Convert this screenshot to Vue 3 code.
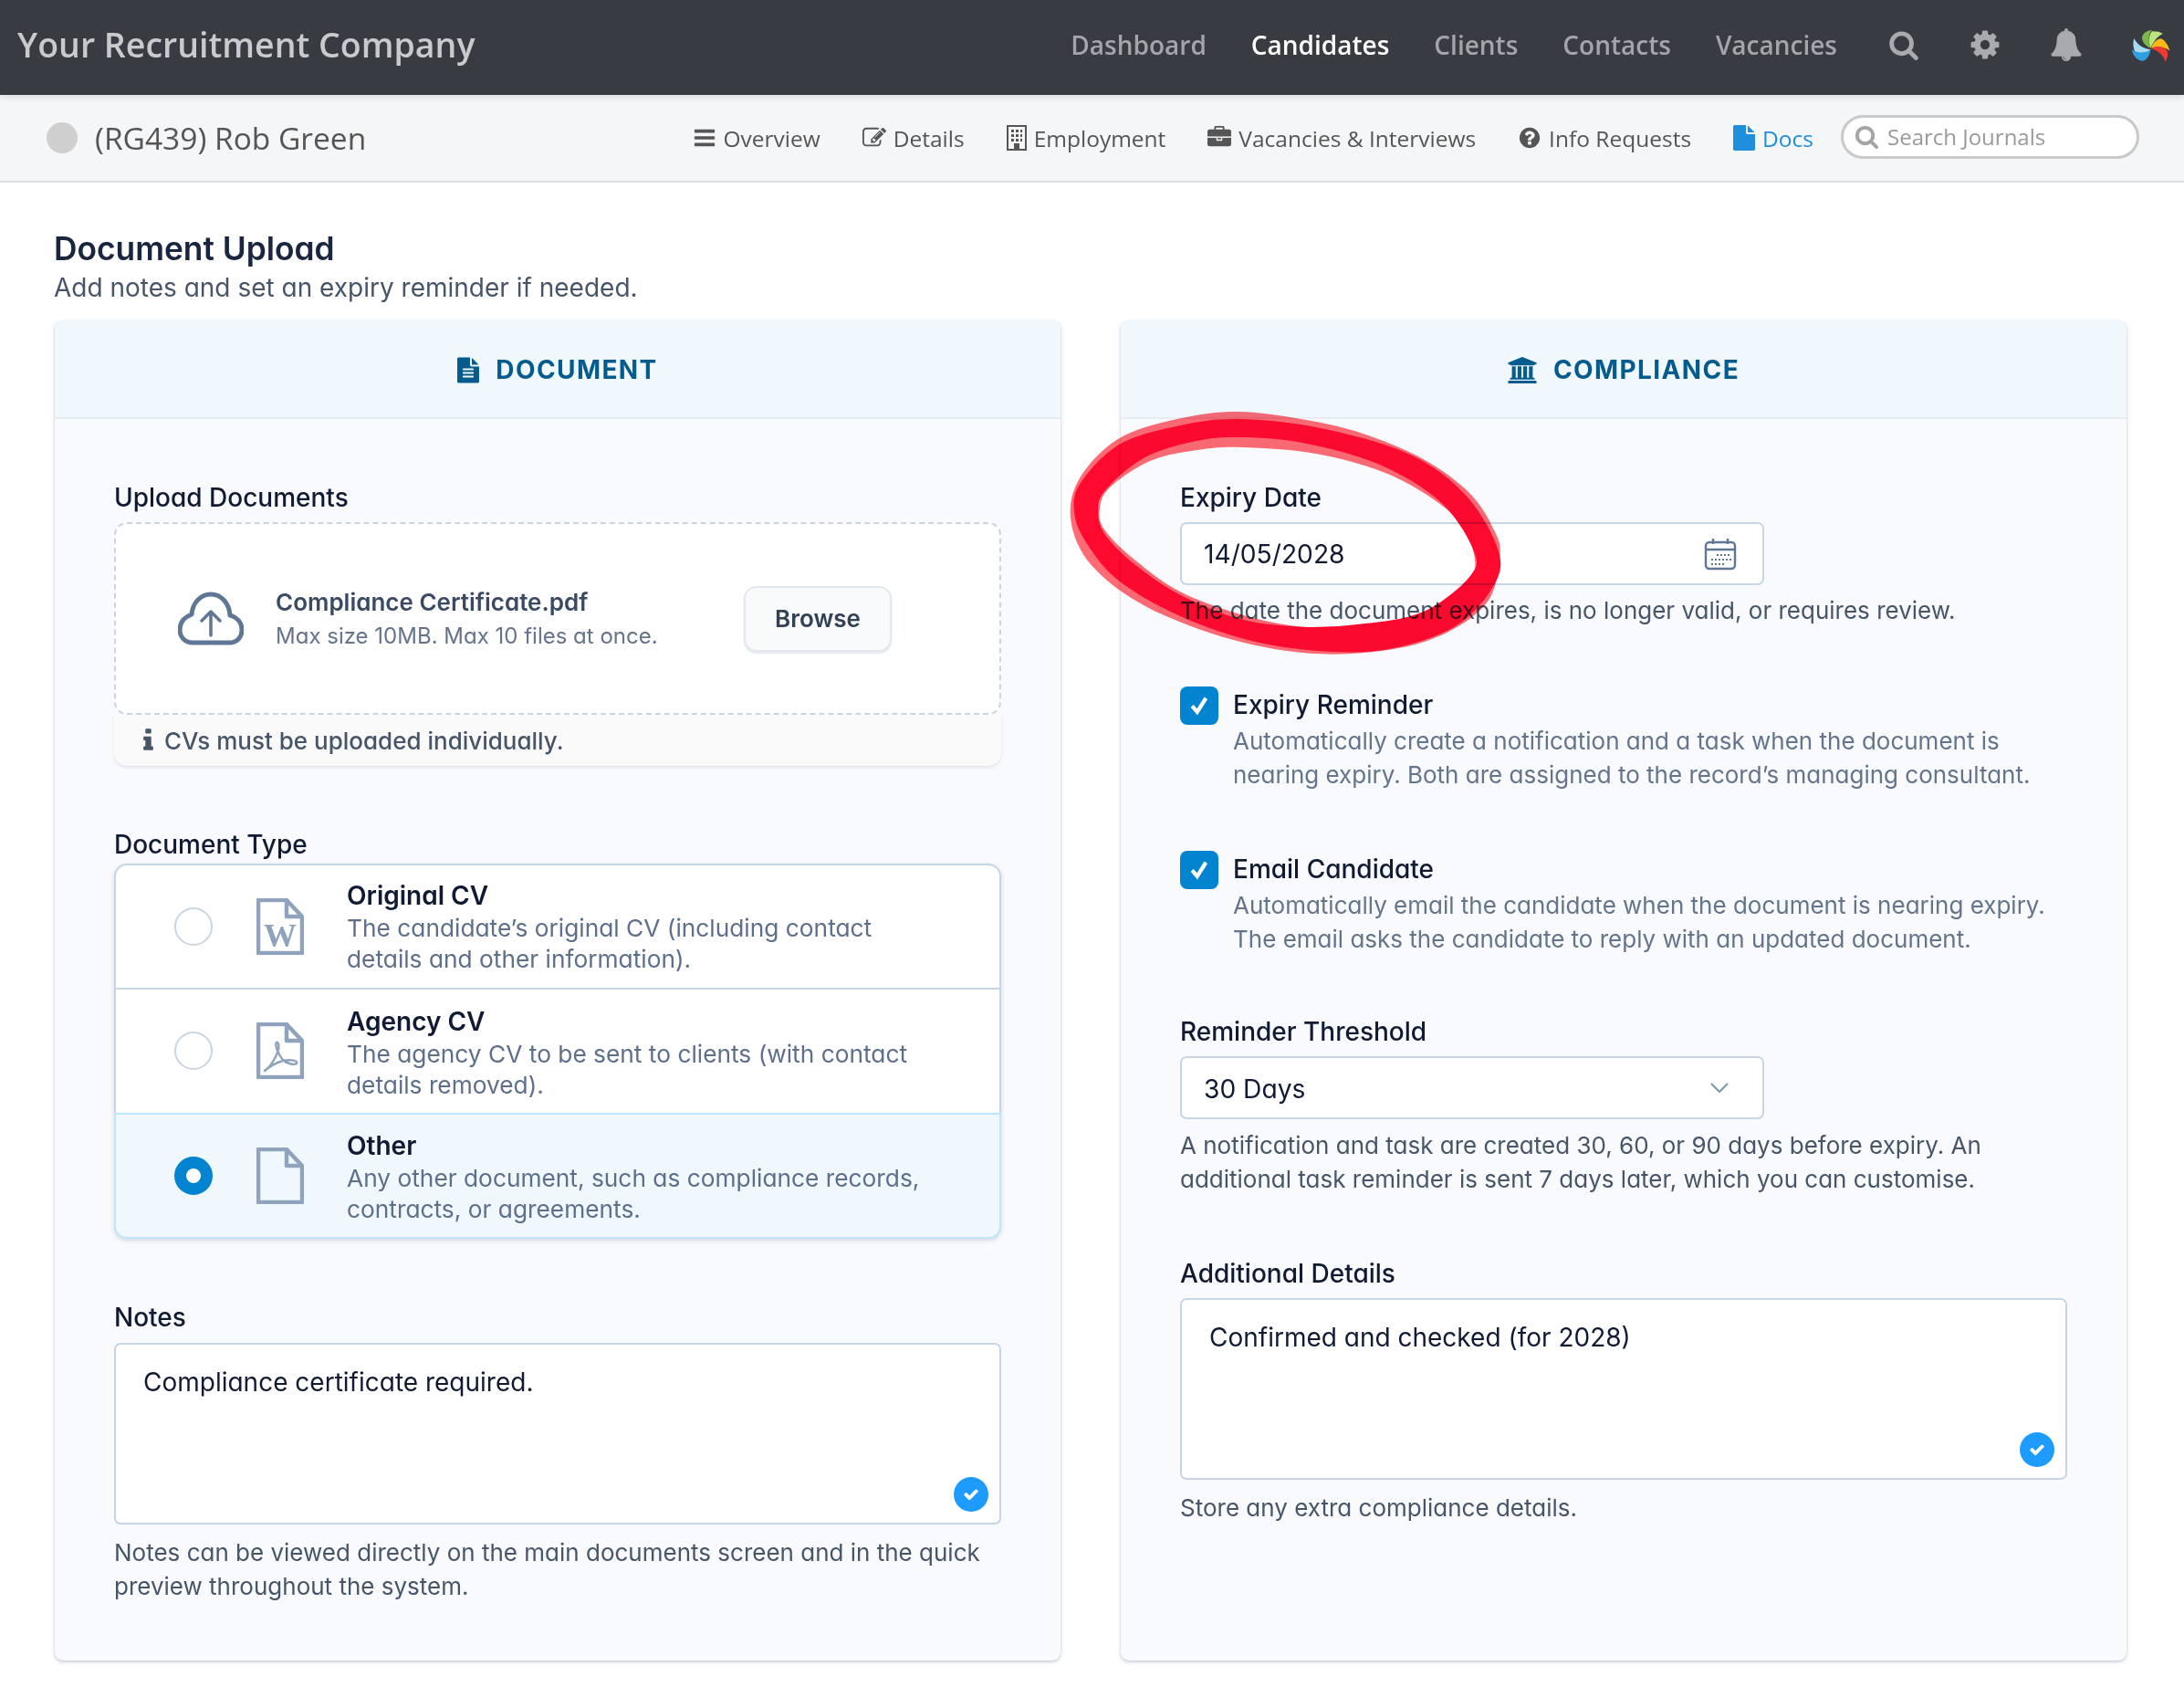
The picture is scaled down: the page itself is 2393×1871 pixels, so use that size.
<script setup>
const mainNav = [
  { label: 'Dashboard' },
  { label: 'Candidates', active: true },
  { label: 'Clients' },
  { label: 'Contacts' },
  { label: 'Vacancies' },
];

const docTypes = [
  { title: 'Original CV', kind: 'word', desc: 'The candidate’s original CV (including contact details and other information).' },
  { title: 'Agency CV', kind: 'pdf', desc: 'The agency CV to be sent to clients (with contact details removed).' },
  { title: 'Other', kind: 'blank', selected: true, desc: 'Any other document, such as compliance records, contracts, or agreements.' },
];

// closed smooth curve through traced points, used for the hand drawn ring
function smooth(pts) {
  const n = pts.length;
  let d = `M${pts[0][0]} ${pts[0][1]}`;
  for (let i = 0; i < n; i++) {
    const p0 = pts[(i - 1 + n) % n];
    const p1 = pts[i];
    const p2 = pts[(i + 1) % n];
    const p3 = pts[(i + 2) % n];
    const c1 = [p1[0] + (p2[0] - p0[0]) / 6, p1[1] + (p2[1] - p0[1]) / 6];
    const c2 = [p2[0] - (p3[0] - p1[0]) / 6, p2[1] - (p3[1] - p1[1]) / 6];
    d += `C${c1[0]} ${c1[1]} ${c2[0]} ${c2[1]} ${p2[0]} ${p2[1]}`;
  }
  return d + 'Z';
}

const lightOuter = [[590, 33], [800, 58], [1000, 105], [1200, 190], [1350, 300], [1430, 420], [1450, 510], [1400, 670], [1200, 790], [900, 830], [600, 790], [300, 680], [110, 540], [40, 390], [70, 250], [200, 120], [400, 55]];
const hole = [[600, 150], [850, 172], [1100, 245], [1300, 375], [1365, 500], [1345, 600], [1200, 690], [1000, 735], [800, 740], [600, 700], [400, 625], [250, 520], [150, 420], [135, 350], [170, 280], [300, 195], [450, 160]];
const solidOuter = [[590, 57], [850, 85], [1150, 172], [1340, 310], [1448, 500], [1420, 620], [1300, 740], [1100, 810], [900, 822], [650, 790], [400, 705], [200, 590], [95, 470], [52, 370], [70, 270], [200, 140], [400, 78]];
const solidInner = [[590, 117], [800, 135], [1050, 205], [1250, 325], [1360, 480], [1355, 570], [1200, 690], [1000, 730], [800, 740], [600, 715], [400, 635], [250, 535], [155, 440], [130, 370], [150, 295], [280, 185], [450, 130]];

const ringLight = smooth(lightOuter) + smooth(hole);
const ringSolid = smooth(solidOuter) + smooth(solidInner);
</script>

<template>
  <div class="page">
    <header class="topbar">
      <div class="brand">Your Recruitment Company</div>
      <nav class="main-nav">
        <a v-for="item in mainNav" :key="item.label" :class="{ active: item.active }">{{ item.label }}</a>
      </nav>
      <div class="top-icons">
        <svg class="ti-search" viewBox="0 0 1792 1792"><path d="M1216 832q0-185-131.500-316.500t-316.500-131.500-316.500 131.500-131.500 316.500 131.500 316.500 316.500 131.500 316.500-131.500 131.500-316.500zm512 832q0 52-38 90t-90 38q-54 0-90-38l-343-342q-179 124-399 124-143 0-273.500-55.500t-225-150-150-225-55.500-273.500 55.500-273.500 150-225 225-150 273.500-55.500 273.500 55.500 225 150 150 225 55.500 273.500q0 220-124 399l343 343q37 37 37 90z"/></svg>
        <svg class="ti-cog" viewBox="0 0 1792 1792"><path d="M1152 896q0-106-75-181t-181-75-181 75-75 181 75 181 181 75 181-75 75-181zm512-109v222q0 12-8 23t-20 13l-185 28q-19 54-39 91 35 50 107 138 10 12 10 25t-9 23q-27 37-99 108t-94 71q-12 0-26-9l-138-108q-44 23-91 38-16 136-29 186-7 28-36 28h-222q-14 0-24.500-8.500t-11.500-21.500l-28-184q-49-16-90-37l-141 107q-10 9-25 9-14 0-25-11-126-114-165-168-7-10-7-23 0-12 8-23 15-21 51-66.500t54-70.500q-27-50-41-99l-183-27q-13-2-21-12.500t-8-23.500v-222q0-12 8-23t19-13l186-28q14-46 39-92-40-57-107-138-10-12-10-24 0-10 9-23 26-36 98.500-107.500t94.500-71.500q13 0 26 10l138 107q44-23 91-38 16-136 29-186 7-28 36-28h222q14 0 24.500 8.500t11.500 21.500l28 184q49 16 90 37l142-107q9-9 24-9 13 0 25 10 129 119 165 170 7 8 7 22 0 12-8 23-15 21-51 66.500t-54 70.500q26 50 41 98l183 28q13 2 21 12.500t8 23.500z"/></svg>
        <svg class="ti-bell" viewBox="0 0 1792 1792"><path d="M912 1696q0-16-16-16-59 0-101.500-42.500t-42.500-101.500q0-16-16-16t-16 16q0 73 51.500 124.500t124.500 51.500q16 0 16-16zm816-288q0 52-38 90t-90 38h-448q0 106-75 181t-181 75-181-75-75-181h-448q-52 0-90-38t-38-90q50-42 91-88t85-119.500 74.500-158.500 50-206 19.500-260q0-152 117-282.500t307-158.500q-8-19-8-39 0-40 28-68t68-28 68 28 28 68q0 20-8 39 190 28 307 158.500t117 282.500q0 139 19.500 260t50 206 74.500 158.500 85 119.500 91 88z"/></svg>
        <svg class="ti-logo" viewBox="250 60 136 116">
          <path fill="#7ab648" d="M318 128C296 118 284 100 292 84C300 72 312 68 322 67C310 80 310 105 318 128Z"/>
          <path fill="#bde57f" d="M318 128C310 105 312 85 322 72C338 72 350 74 358 80C340 88 328 105 318 128Z"/>
          <path fill="#fbb917" d="M320 128C325 110 340 96 352 96C365 100 376 118 381 136C365 125 340 120 320 128Z"/>
          <path fill="#ee3a33" d="M320 130C340 118 360 122 372 136C378 150 372 162 367 173C362 155 345 135 320 130Z"/>
          <path fill="#a6dcee" d="M318 132C295 130 275 118 263 95C258 110 260 130 268 142C285 150 305 148 318 132Z"/>
          <path fill="#2f9fe0" d="M318 132C300 145 275 145 256 133C258 150 270 165 288 170C305 170 315 150 318 132Z"/>
        </svg>
      </div>
    </header>

    <div class="subnav">
      <span class="status-dot"></span>
      <span class="person">(RG439) Rob Green</span>
      <nav class="sub-links">
        <a>
          <svg class="si" viewBox="0 0 1792 1792"><path d="M1664 1344v128q0 26-19 45t-45 19h-1408q-26 0-45-19t-19-45v-128q0-26 19-45t45-19h1408q26 0 45 19t19 45zm0-512v128q0 26-19 45t-45 19h-1408q-26 0-45-19t-19-45v-128q0-26 19-45t45-19h1408q26 0 45 19t19 45zm0-512v128q0 26-19 45t-45 19h-1408q-26 0-45-19t-19-45v-128q0-26 19-45t45-19h1408q26 0 45 19t19 45z"/></svg>
          Overview
        </a>
        <a>
          <svg class="si" viewBox="0 0 1792 1792"><path d="M888 1184l116-116-152-152-116 116v56h96v96h56zm440-720q-16-16-33 1l-350 350q-17 17-1 33t33-1l350-350q17-17 1-33zm80 594v190q0 119-84.500 203.500t-203.500 84.500h-832q-119 0-203.500-84.500t-84.500-203.500v-832q0-119 84.500-203.500t203.500-84.500h832q63 0 117 25 15 7 18 23 3 17-9 29l-49 49q-14 14-32 8-23-6-45-6h-832q-66 0-113 47t-47 113v832q0 66 47 113t113 47h832q66 0 113-47t47-113v-126q0-13 9-22l64-64q15-15 35-7t20 29zm-96-738l288 288-672 672h-288v-288zm444 132l-92 92-288-288 92-92q28-28 68-28t68 28l152 152q28 28 28 68t-28 68z"/></svg>
          Details
        </a>
        <a>
          <svg class="si building" viewBox="0 0 22 28">
            <rect x="1" y="1" width="20" height="26" fill="none" stroke="#555" stroke-width="2"/>
            <path d="M5 5h3v3H5zM10 5h3v3h-3zM15 5h2v3h-2zM5 10h3v3H5zM10 10h3v3h-3zM15 10h2v3h-2zM5 15h3v3H5zM10 15h3v3h-3zM15 15h2v3h-2zM8 20h6v7H8z"/>
          </svg>
          Employment
        </a>
        <a>
          <svg class="si" viewBox="0 0 1792 1792"><path d="M640 256h512v-128h-512v128zm1152 640v480q0 66-47 113t-113 47h-1472q-66 0-113-47t-47-113v-480h672v160q0 26 19 45t45 19h320q26 0 45-19t19-45v-160h672zm-768 0v128h-256v-128h256zm768-480v384h-1792v-384q0-66 47-113t113-47h352v-160q0-40 28-68t68-28h576q40 0 68 28t28 68v160h352q66 0 113 47t47 113z"/></svg>
          Vacancies &amp; Interviews
        </a>
        <a>
          <svg class="si" viewBox="0 0 1792 1792"><path d="M1024 1376v-192q0-14-9-23t-23-9h-192q-14 0-23 9t-9 23v192q0 14 9 23t23 9h192q14 0 23-9t9-23zm256-672q0-88-55.500-163t-138.500-116-170-41q-243 0-371 213-15 24 8 42l132 100q7 6 19 6 16 0 25-12 53-68 86-92 34-24 86-24 48 0 85.500 26t37.500 59q0 38-20 61t-68 45q-63 28-115.500 86.500t-52.500 125.500v36q0 14 9 23t23 9h192q14 0 23-9t9-23q0-19 21.500-49.500t54.500-49.500q32-18 49-28.500t46-35 44.500-48 28-60.500 12.500-81zm384 192q0 209-103 385.500t-279.500 279.500-385.500 103-385.500-103-279.500-279.500-103-385.500 103-385.500 279.500-279.500 385.500-103 385.500 103 279.500 279.500 103 385.500z"/></svg>
          Info Requests
        </a>
        <a class="current">
          <svg class="si" viewBox="128 0 1536 1792"><path d="M1152 512v-472q22 14 36 28l408 408q14 14 28 36h-472zm-128 32q0 40 28 68t68 28h544v1056q0 40-28 68t-68 28h-1344q-40 0-68-28t-28-68v-1600q0-40 28-68t68-28h800v544z"/></svg>
          Docs
        </a>
      </nav>
      <div class="journal-search">
        <svg viewBox="0 0 1792 1792"><path d="M1216 832q0-185-131.500-316.500t-316.500-131.500-316.500 131.500-131.500 316.500 131.500 316.500 316.500 131.500 316.500-131.500 131.500-316.500zm512 832q0 52-38 90t-90 38q-54 0-90-38l-343-342q-179 124-399 124-143 0-273.500-55.500t-225-150-150-225-55.500-273.500 55.500-273.500 150-225 225-150 273.500-55.500 273.500 55.500 225 150 150 225 55.500 273.500q0 220-124 399l343 343q37 37 37 90z"/></svg>
        <span>Search Journals</span>
      </div>
    </div>

    <main class="content">
      <h1 class="page-title">Document Upload</h1>
      <p class="page-sub">Add notes and set an expiry reminder if needed.</p>

      <div class="cards">
        <section class="card">
          <div class="card-head">
            <svg class="head-icon" viewBox="128 0 1536 1792"><path d="M1596 476q14 14 28 36h-472v-472q22 14 36 28zm-476 164h544v1056q0 40-28 68t-68 28h-1344q-40 0-68-28t-28-68v-1600q0-40 28-68t68-28h800v544q0 40 28 68t68 28zm160 736v-64q0-14-9-23t-23-9h-704q-14 0-23 9t-9 23v64q0 14 9 23t23 9h704q14 0 23-9t9-23zm0-256v-64q0-14-9-23t-23-9h-704q-14 0-23 9t-9 23v64q0 14 9 23t23 9h704q14 0 23-9t9-23zm0-256v-64q0-14-9-23t-23-9h-704q-14 0-23 9t-9 23v64q0 14 9 23t23 9h704q14 0 23-9t9-23z"/></svg>
            <h2>DOCUMENT</h2>
          </div>
          <div class="card-body">
            <label class="field-label">Upload Documents</label>
            <div class="dropzone">
              <svg class="cloud" viewBox="0 0 72 60" fill="none" stroke="#5f7694" stroke-width="5" stroke-linecap="round" stroke-linejoin="round">
                <path d="M16 56H56C65 56 70 50 70 42C70 34 65 28 57 26C56 12 47 3 36 3C25 3 16 12 15 25C7 28 2 34 2 42C2 50 8 56 16 56Z"/>
                <path d="M36 48V23M26 32L36 22L46 32" stroke-width="3.500"/>
              </svg>
              <div class="file-info">
                <div class="file-name">Compliance Certificate.pdf</div>
                <div class="file-limit">Max size 10MB. Max 10 files at once.</div>
              </div>
              <button class="browse">Browse</button>
            </div>
            <div class="drop-note">
              <svg viewBox="0 0 640 1792"><path d="M640 1344v128q0 26-19 45t-45 19h-512q-26 0-45-19t-19-45v-128q0-26 19-45t45-19h64v-384h-64q-26 0-45-19t-19-45v-128q0-26 19-45t45-19h384q26 0 45 19t19 45v576h64q26 0 45 19t19 45zm-128-1152v192q0 26-19 45t-45 19h-256q-26 0-45-19t-19-45v-192q0-26 19-45t45-19h256q26 0 45 19t19 45z"/></svg>
              CVs must be uploaded individually.
            </div>

            <label class="field-label gap-top">Document Type</label>
            <div class="type-list">
              <div v-for="t in docTypes" :key="t.title" class="type-row" :class="{ selected: t.selected }">
                <span class="radio"></span>
                <svg class="file-glyph" viewBox="0 0 52 62" fill="none" stroke="#8fa3bd" stroke-width="4.500" stroke-linejoin="round">
                  <path d="M2 2H33L50 20V60H2Z"/>
                  <path d="M33 2V20H50"/>
                  <text v-if="t.kind === 'word'" x="26" y="53" text-anchor="middle" class="w-mark">W</text>
                  <path v-if="t.kind === 'pdf'" stroke-width="2.500" d="M9 53C14 50 21 40 24 30C25 25 24 21 22 22C20 24 23 34 29 41C33 45 41 47 44 45C46 42 38 40 29 42C21 44 12 50 9 53Z"/>
                </svg>
                <div class="type-text">
                  <div class="type-title">{{ t.title }}</div>
                  <div class="type-desc">{{ t.desc }}</div>
                </div>
              </div>
            </div>

            <label class="field-label gap-top">Notes</label>
            <div class="textbox notes-box">
              Compliance certificate required.
              <span class="tick-badge"><svg viewBox="0 0 1792 1792"><path d="M1671 566q0 40-28 68l-724 724-136 136q-28 28-68 28t-68-28l-136-136-362-362q-28-28-28-68t28-68l136-136q28-28 68-28t68 28l294 295 656-657q28-28 68-28t68 28l136 136q28 28 28 68z"/></svg></span>
            </div>
            <p class="help notes-help">Notes can be viewed directly on the main documents screen and in the quick preview throughout the system.</p>
          </div>
        </section>

        <section class="card">
          <div class="card-head">
            <svg class="head-icon bank" viewBox="0 0 1920 1792"><path d="M960 0l960 384v128h-128q0 26-20.500 45t-48.500 19h-1526q-28 0-48.500-19t-20.500-45h-128v-128zm-704 640h256v768h128v-768h256v768h128v-768h256v768h128v-768h256v768h59q28 0 48.500 19t20.500 45v64h-1664v-64q0-26 20.500-45t48.500-19h59v-768zm1595 960q28 0 48.500 19t20.500 45v128h-1920v-128q0-26 20.500-45t48.500-19h1782z"/></svg>
            <h2>COMPLIANCE</h2>
          </div>
          <div class="card-body">
            <label class="field-label">Expiry Date</label>
            <div class="control">
              <span>14/05/2028</span>
              <svg class="calendar" viewBox="0 0 36 36" fill="none" stroke="#5f7694" stroke-width="2.400">
                <rect x="2" y="5" width="32" height="29" rx="4"/>
                <path d="M2 13H34M10 1V7M26 1V7"/>
                <path stroke-width="2" stroke-dasharray="2 2" d="M14 19H30M8 24H30M8 29H24"/>
              </svg>
            </div>
            <p class="help small-gap">The date the document expires, is no longer valid, or requires review.</p>

            <div class="check-row first">
              <span class="checkbox"><svg viewBox="0 0 24 24" fill="none" stroke="#fff" stroke-width="4.600"><path d="M3.500 12.500L9.500 19.500L20 3"/></svg></span>
              <div>
                <div class="check-title">Expiry Reminder</div>
                <p class="check-desc">Automatically create a notification and a task when the document is nearing expiry. Both are assigned to the record’s managing consultant.</p>
              </div>
            </div>
            <div class="check-row">
              <span class="checkbox"><svg viewBox="0 0 24 24" fill="none" stroke="#fff" stroke-width="4.600"><path d="M3.500 12.500L9.500 19.500L20 3"/></svg></span>
              <div>
                <div class="check-title">Email Candidate</div>
                <p class="check-desc">Automatically email the candidate when the document is nearing expiry. The email asks the candidate to reply with an updated document.</p>
              </div>
            </div>

            <label class="field-label section-top">Reminder Threshold</label>
            <div class="control select">
              <span>30 Days</span>
              <svg class="chevron" viewBox="0 0 20 12" fill="none" stroke="#7a9aa8" stroke-width="2.200"><path d="M1 1L10 10L19 1"/></svg>
            </div>
            <p class="help threshold-help">A notification and task are created 30, 60, or 90 days before expiry. An additional task reminder is sent 7 days later, which you can customise.</p>

            <label class="field-label details-label">Additional Details</label>
            <div class="textbox details-box">
              Confirmed and checked (for 2028)
              <span class="tick-badge"><svg viewBox="0 0 1792 1792"><path d="M1671 566q0 40-28 68l-724 724-136 136q-28 28-68 28t-68-28l-136-136-362-362q-28-28-28-68t28-68l136-136q28-28 68-28t68 28l294 295 656-657q28-28 68-28t68 28l136 136q28 28 28 68z"/></svg></span>
            </div>
            <p class="help details-help">Store any extra compliance details.</p>
          </div>
        </section>
      </div>
    </main>

    <!-- hand drawn annotation on top of the expiry date field -->
    <svg class="ring" viewBox="0 0 1500 870">
      <path fill="#ff6b75" fill-rule="evenodd" :d="ringLight"/>
      <path fill="#ff0a2e" fill-rule="evenodd" :d="ringSolid"/>
    </svg>
  </div>
</template>

<style scoped>
.page {
  position: relative;
  width: 2393px;
  height: 1871px;
  overflow: hidden;
  background: #fff;
  font-family: Inter, "Noto Sans", sans-serif;
  font-feature-settings: "cv11" 1;
  color: #111a33;
}

.topbar {
  height: 104px;
  background: #383b42;
  display: flex;
  align-items: center;
  padding: 0 14px 0 19px;
  font-family: "Open Sans", sans-serif;
  font-feature-settings: normal;
  position: relative;
  z-index: 2;
  box-shadow: 0 2px 8px rgba(0, 0, 0, 0.12);
}

.brand {
  color: #c9cacc;
  font-size: 37.500px;
  font-weight: 600;
  margin-top: -8px;
}

.main-nav {
  margin-left: auto;
  display: flex;
  gap: 49px;
  margin-top: -6px;
}

.main-nav a {
  color: #a3a5a8;
  font-size: 28px;
  font-weight: 600;
}

.main-nav a.active {
  color: #fff;
}

.top-icons {
  display: flex;
  align-items: center;
  margin-left: 56px;
  fill: #a8aaad;
  margin-top: -6px;
}

.ti-search {
  width: 34px;
  height: 34px;
}

.ti-cog {
  width: 36px;
  height: 36px;
  margin-left: 54px;
}

.ti-bell {
  width: 36px;
  height: 36px;
  margin-left: 53px;
}

.ti-logo {
  width: 45px;
  height: 39px;
  margin-left: 52px;
}

.subnav {
  height: 94px;
  box-sizing: content-box;
  background: #f5f6f8;
  border-bottom: 2px solid #dedfe1;
  display: flex;
  align-items: center;
  padding: 0 49px 0 51px;
  font-family: "Open Sans", sans-serif;
  font-feature-settings: normal;
  color: #555;
}

.status-dot {
  width: 34px;
  height: 34px;
  border-radius: 50%;
  background: #cfcfcf;
}

.person {
  margin-left: 19px;
  font-size: 33.500px;
}

.sub-links {
  margin-left: auto;
  display: flex;
  gap: 46px;
  font-size: 24.500px;
}

.sub-links a {
  display: flex;
  align-items: center;
  gap: 8px;
}

.si {
  width: 26px;
  height: 26px;
  fill: #555;
}

.si.building {
  width: 22px;
  height: 28px;
}

.sub-links a.current {
  color: #1f8fdc;
}

.sub-links a.current .si {
  fill: #1f8fdc;
  width: 24px;
  height: 28px;
}

.journal-search {
  margin-left: 30px;
  margin-top: -3px;
  width: 327px;
  height: 48px;
  box-sizing: border-box;
  border: 3px solid #c9c9c9;
  border-radius: 24px;
  background: #fff;
  display: flex;
  align-items: center;
  padding-left: 12px;
  gap: 9px;
  color: #9a9a9a;
  font-size: 24px;
}

.journal-search svg {
  width: 27px;
  height: 27px;
  fill: #a5a5a5;
}

.content {
  padding: 49px 63px 0 60px;
}

.page-title {
  margin: 0 0 0 -1px;
  font-size: 35.300px;
  line-height: 48px;
  font-weight: 600;
  color: #1a2540;
}

.page-sub {
  margin: 0 0 0 -1px;
  font-size: 28px;
  line-height: 37px;
  color: #475569;
}

.cards {
  margin-top: 17px;
  display: grid;
  grid-template-columns: 1fr 1fr;
  gap: 66px;
  height: 1468px;
}

.card {
  background: #f9fafd;
  border-radius: 9px;
  box-shadow: 0 1px 3px rgba(100, 116, 139, 0.3), 0 2px 5px rgba(100, 116, 139, 0.18);
  display: flex;
  flex-direction: column;
  overflow: hidden;
}

.card-head {
  height: 104px;
  padding-top: 2px;
  background: #f0f8fe;
  border-bottom: 2px solid #e6ecf2;
  display: flex;
  align-items: center;
  justify-content: center;
  gap: 18px;
  flex-shrink: 0;
}

.card-head h2 {
  margin: 0;
  font-size: 28px;
  font-weight: 700;
  letter-spacing: 1.400px;
  color: #045b8d;
}

.head-icon {
  width: 24px;
  height: 29px;
  fill: #045b8d;
}

.head-icon.bank {
  width: 32px;
  height: 29px;
}

.card-body {
  padding: 68px 65px 0;
  display: flex;
  flex-direction: column;
}

.field-label {
  font-size: 28px;
  line-height: 37px;
  font-weight: 500;
  color: #111a33;
  margin-bottom: 8px;
}

.gap-top {
  margin-top: 68px;
}

.dropzone {
  height: 211px;
  box-sizing: border-box;
  border: 2px dashed #cbd5e1;
  border-radius: 14px;
  background: #fff;
  display: flex;
  align-items: center;
  padding-left: 68px;
}

.cloud {
  width: 72px;
  height: 60px;
  flex-shrink: 0;
}

.file-info {
  margin-left: 35px;
  width: 513px;
}

.file-name {
  font-size: 26px;
  line-height: 36px;
  padding-top: 1px;
  font-weight: 600;
  color: #3a4a63;
}

.file-limit {
  font-size: 24px;
  line-height: 34px;
  padding-top: 2px;
  color: #64748b;
}

.browse {
  width: 162px;
  height: 72px;
  background: #f8fafc;
  border: 2px solid #e2e8f0;
  border-radius: 14px;
  box-shadow: 0 2px 2px rgba(148, 163, 184, 0.25);
  font: 600 26px Inter, sans-serif;
  font-feature-settings: "cv11" 1;
  color: #334155;
}

.drop-note {
  height: 56px;
  background: #fafafa;
  border-radius: 0 0 14px 14px;
  box-shadow: 0 2px 3px rgba(100, 116, 139, 0.15);
  display: flex;
  align-items: center;
  gap: 12px;
  padding-left: 32px;
  font-size: 26px;
  font-weight: 500;
  color: #475569;
}

.drop-note svg {
  width: 11px;
  height: 30px;
  fill: #475569;
}

.type-list {
  height: 411px;
  box-sizing: border-box;
  margin-top: -6px;
  border: 2px solid #c8d5e4;
  border-radius: 14px;
  background: #fff;
  display: flex;
  flex-direction: column;
  box-shadow: 0 2px 5px rgba(100, 116, 139, 0.25);
}

.type-row {
  flex: 1;
  display: flex;
  align-items: center;
  padding-left: 64px;
  border-bottom: 2px solid #c8d5e4;
}

.type-row:last-child {
  border-bottom: 0;
}

.type-row.selected {
  background: #f0f8fe;
  border-radius: 0 0 12px 12px;
  box-shadow: 0 0 0 2px #bfe6fb;
}

.type-row:not(:first-child) .type-text {
  padding-top: 4px;
}

.radio {
  width: 42px;
  height: 42px;
  box-sizing: border-box;
  border-radius: 50%;
  border: 2px solid #cbd5e1;
  background: #fff;
  flex-shrink: 0;
}

.selected .radio {
  border: 13px solid #0284d0;
}

.file-glyph {
  width: 52px;
  height: 62px;
  margin-left: 48px;
  flex-shrink: 0;
}

.w-mark {
  font: 700 36px "Liberation Serif", serif;
  fill: #8fa3bd;
  stroke: none;
}

.type-text {
  margin-left: 47px;
  width: 640px;
}

.type-title {
  font-size: 28px;
  line-height: 37px;
  font-weight: 600;
  color: #111a33;
}

.type-desc {
  font-size: 26.300px;
  line-height: 34px;
  color: #5d6f8b;
}

.textbox {
  position: relative;
  box-sizing: border-box;
  border: 2px solid #c8d5e4;
  border-radius: 7px;
  background: #fff;
  padding: 21px 20px 0 30px;
  font-size: 28px;
  line-height: 40px;
  color: #111a33;
}

.notes-box {
  height: 199px;
  margin-top: 1px;
}

.details-box {
  height: 199px;
}

.tick-badge {
  position: absolute;
  right: 12px;
  bottom: 12px;
  width: 38px;
  height: 38px;
  border-radius: 50%;
  background: #1e9bff;
  display: flex;
  align-items: center;
  justify-content: center;
}

.tick-badge svg {
  width: 18px;
  height: 18px;
  fill: #fff;
}

.help {
  margin: 0;
  font-size: 26px;
  line-height: 37px;
  color: #475569;
}

.notes-help {
  margin-top: 12px;
}

.details-help {
  margin-top: 12px;
}

.small-gap {
  margin-top: 9px;
}

.threshold-help {
  margin-top: 10px;
}

.details-label {
  margin-top: 67px;
}

.control {
  height: 69px;
  width: 640px;
  box-sizing: border-box;
  border: 2px solid #c8d5e4;
  border-radius: 7px;
  background: #fff;
  display: flex;
  align-items: center;
  justify-content: space-between;
  padding: 0 28px 0 24px;
  font-size: 28.200px;
  color: #111a33;
}

.control.select span {
  padding-top: 2px;
}

.calendar {
  width: 36px;
  height: 36px;
}

.chevron {
  width: 20px;
  height: 12px;
  margin-right: 9px;
}

.check-row {
  display: flex;
  gap: 16px;
  margin-top: 67px;
}

.check-row.first {
  margin-top: 66.500px;
}

.checkbox {
  width: 42px;
  height: 42px;
  border-radius: 8px;
  background: #0284d0;
  display: flex;
  align-items: center;
  justify-content: center;
  flex-shrink: 0;
  margin-top: -2px;
}

.checkbox svg {
  width: 22px;
  height: 22px;
}

.check-title {
  font-size: 28px;
  line-height: 37px;
  font-weight: 500;
  color: #111a33;
  margin-bottom: 2px;
}

.check-desc {
  margin: 0;
  font-size: 26px;
  line-height: 37px;
  color: #64748b;
}

.section-top {
  margin-top: 65.500px;
}

.ring {
  position: absolute;
  left: 1160px;
  top: 440px;
  width: 500px;
  height: 290px;
  mix-blend-mode: multiply;
}
</style>

<style>
html,
body {
  margin: 0;
  background: #fff;
}
</style>
